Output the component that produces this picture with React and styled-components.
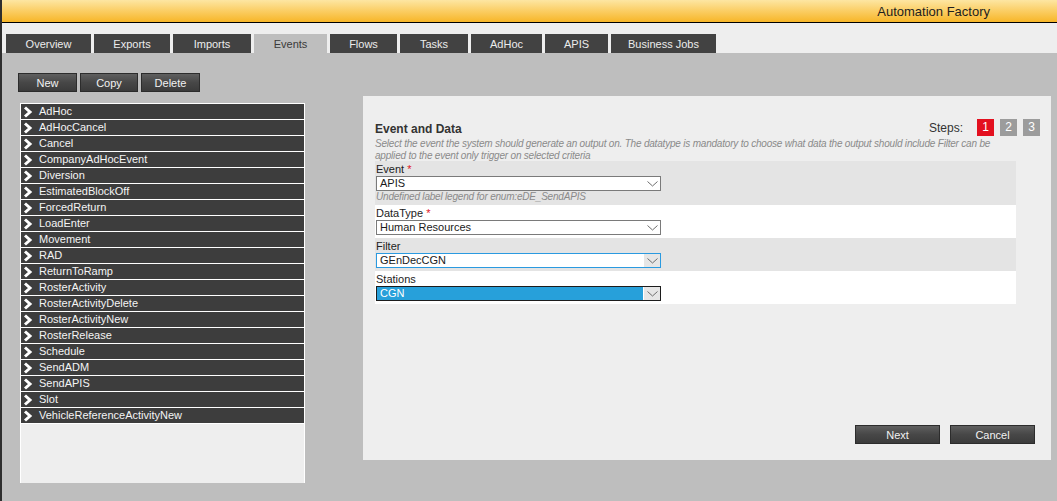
import React from 'react'
import styled, { createGlobalStyle } from 'styled-components'

const GlobalStyle = createGlobalStyle`
  html, body {
    margin: 0;
    padding: 0;
    background: #bebebe;
    font-family: "Liberation Sans", Arial, sans-serif;
  }
  #root {
    width: 1057px;
    height: 501px;
    overflow: hidden;
  }
`

const TABS = [
  { name: 'Overview', w: 85 },
  { name: 'Exports', w: 76 },
  { name: 'Imports', w: 78 },
  { name: 'Events', w: 73, active: true },
  { name: 'Flows', w: 67 },
  { name: 'Tasks', w: 68 },
  { name: 'AdHoc', w: 71 },
  { name: 'APIS', w: 63 },
  { name: 'Business Jobs', w: 105 },
]

const EVENTS = [
  'AdHoc', 'AdHocCancel', 'Cancel', 'CompanyAdHocEvent', 'Diversion',
  'EstimatedBlockOff', 'ForcedReturn', 'LoadEnter', 'Movement', 'RAD',
  'ReturnToRamp', 'RosterActivity', 'RosterActivityDelete', 'RosterActivityNew',
  'RosterRelease', 'Schedule', 'SendADM', 'SendAPIS', 'Slot',
  'VehicleReferenceActivityNew',
]

function Chevron() {
  return (
    <svg width="10" height="12" viewBox="0 0 10 12">
      <polyline points="2,1.5 7,6 2,10.5" fill="none" stroke="#fff" strokeWidth="3" />
    </svg>
  )
}

function ArrowDown() {
  return (
    <svg width="11" height="6" viewBox="0 0 11 6">
      <polyline points="0.5,0.5 5.5,5 10.5,0.5" fill="none" stroke="#6d6d6d" strokeWidth="1" />
    </svg>
  )
}

function Select({ value, variant }) {
  return (
    <SelectBox variant={variant}>
      <SelectValue variant={variant}>{value}</SelectValue>
      <SelectArrow variant={variant}><ArrowDown /></SelectArrow>
    </SelectBox>
  )
}

function App() {
  return (
    <Page>
      <GlobalStyle />
      <Header>Automation Factory</Header>
      <TabStrip>
        {TABS.map(t => (
          <Tab key={t.name} $w={t.w} $active={t.active}>{t.name}</Tab>
        ))}
      </TabStrip>
      <Main>
        <Toolbar>
          <ToolButton $w={59}>New</ToolButton>
          <ToolButton $w={58}>Copy</ToolButton>
          <ToolButton $w={59}>Delete</ToolButton>
        </Toolbar>
        <Content>
          <EventList>
            {EVENTS.map(e => (
              <EventRow key={e}>
                <Chevron />
                <span>{e}</span>
              </EventRow>
            ))}
          </EventList>
          <Wizard>
            <WizardHead>
              <Title>Event and Data</Title>
              <Steps>
                <StepsLabel>Steps:</StepsLabel>
                <Step $active>1</Step>
                <Step>2</Step>
                <Step>3</Step>
              </Steps>
            </WizardHead>
            <Hint>
              Select the event the system should generate an output on. The datatype is mandatory to choose what data the output should include Filter can be<br />
              applied to the event only trigger on selected criteria
            </Hint>
            <Form>
              <FieldRow $shade>
                <Label>Event <Req>*</Req></Label>
                <Select value="APIS" />
                <Hint>Undefined label legend for enum:eDE_SendAPIS</Hint>
              </FieldRow>
              <FieldRow>
                <Label>DataType <Req>*</Req></Label>
                <Select value="Human Resources" />
              </FieldRow>
              <FieldRow $shade>
                <Label>Filter</Label>
                <Select value="GEnDecCGN" variant="focus" />
              </FieldRow>
              <FieldRow>
                <Label>Stations</Label>
                <Select value="CGN" variant="selected" />
              </FieldRow>
            </Form>
            <Footer>
              <ToolButton $w={85}>Next</ToolButton>
              <ToolButton $w={85}>Cancel</ToolButton>
            </Footer>
          </Wizard>
        </Content>
      </Main>
    </Page>
  )
}

export default App

const Page = styled.div`
  height: 501px;
  display: flex;
  flex-direction: column;
  border-left: 2px solid #2e2e2e;
  box-sizing: border-box;
`

const Header = styled.div`
  height: 22px;
  border-bottom: 1px solid #000;
  background: linear-gradient(to bottom, #fde6a2 0%, #fbd06a 45%, #f7b628 100%);
  display: flex;
  align-items: center;
  justify-content: flex-end;
  padding-right: 67px;
  font-size: 13px;
  color: #1e1e1e;
`

const TabStrip = styled.div`
  background: #eeeeee;
  padding: 11px 0 0 4px;
  display: flex;
  gap: 3px;
`

const Tab = styled.div`
  width: ${p => p.$w}px;
  height: 19px;
  line-height: 20px;
  text-align: center;
  font-size: 11px;
  background: ${p => (p.$active ? '#bebebe' : '#424242')};
  color: ${p => (p.$active ? '#3a3a3a' : '#ececec')};
`

const Main = styled.div`
  flex: 1;
  background: #bebebe;
  padding: 20px 0 0 16px;
`

const Toolbar = styled.div`
  display: flex;
  gap: 3px;
`

const ToolButton = styled.button`
  width: ${p => p.$w}px;
  height: 19px;
  padding: 0;
  border: 1px solid #2c2c2c;
  background: linear-gradient(to bottom, #5f5f5f 0%, #474747 50%, #3b3b3b 100%);
  color: #f2f2f2;
  font-family: "Liberation Sans", Arial, sans-serif;
  font-size: 11px;
  cursor: pointer;
`

const Content = styled.div`
  display: flex;
  align-items: flex-start;
  margin-top: 4px;
`

const EventList = styled.div`
  margin: 7px 0 0 2px;
  width: 283px;
  height: 379px;
  border: 1px solid #fff;
  border-bottom: none;
  background: #eeeeee;
`

const EventRow = styled.div`
  height: 15px;
  border-bottom: 1px solid #fff;
  background: #3d3d3d;
  color: #f4f4f4;
  font-size: 11px;
  display: flex;
  align-items: center;
  gap: 6px;
  padding-left: 2px;

  span {
    line-height: 15px;
  }
`

const Wizard = styled.div`
  margin-left: 58px;
  width: 665px;
  height: 341px;
  background: #eeeeee;
  padding: 23px 11px 0 12px;
  display: flex;
  flex-direction: column;
`

const WizardHead = styled.div`
  display: flex;
  justify-content: space-between;
  align-items: center;
`

const Title = styled.div`
  font-size: 12px;
  font-weight: bold;
  color: #333;
  padding-top: 2px;
`

const Steps = styled.div`
  display: flex;
  align-items: center;
  gap: 6px;
`

const StepsLabel = styled.span`
  font-size: 12px;
  color: #333;
  margin-right: 8px;
`

const Step = styled.span`
  width: 17px;
  height: 17px;
  line-height: 17px;
  text-align: center;
  font-size: 12px;
  color: #fff;
  background: ${p => (p.$active ? '#e3101f' : '#9c9c9c')};
`

const Hint = styled.div`
  font-size: 10px;
  font-style: italic;
  color: #8a8a8a;
  line-height: 12px;
  letter-spacing: -0.2px;
  white-space: nowrap;
  margin-top: 2px;
`

const Form = styled.div`
  width: 641px;
  margin-top: -1px;
`

const FieldRow = styled.div`
  background: ${p => (p.$shade ? '#e4e4e4' : '#fff')};
  padding: 2px 0 3px 1px;

  ${Hint} {
    margin-top: 0;
    line-height: 11px;
  }
`

const Label = styled.div`
  font-size: 11px;
  line-height: 13px;
  color: #222;
`

const Req = styled.span`
  color: #e0141e;
`

const SelectBox = styled.div`
  width: 283px;
  height: 13px;
  display: flex;
  border: 1px solid ${p => (p.variant === 'focus' ? '#2a9ae0' : p.variant === 'selected' ? '#1c1c1c' : '#7a7a7a')};
  background: #fff;
`

const SelectValue = styled.div`
  flex: 1;
  font-size: 11px;
  line-height: 13px;
  padding-left: 3px;
  color: ${p => (p.variant === 'selected' ? '#fff' : '#1a1a1a')};
  background: ${p => (p.variant === 'selected' ? '#27a0da' : 'transparent')};
  border-right: ${p => (p.variant === 'selected' ? '1px solid #fff' : 'none')};
`

const SelectArrow = styled.div`
  width: 16px;
  display: flex;
  align-items: center;
  justify-content: center;
  background: ${p => (p.variant ? '#e6e6e6' : '#fff')};
`

const Footer = styled.div`
  margin-top: auto;
  display: flex;
  justify-content: flex-end;
  gap: 10px;
  padding: 0 5px 16px 0;
`
